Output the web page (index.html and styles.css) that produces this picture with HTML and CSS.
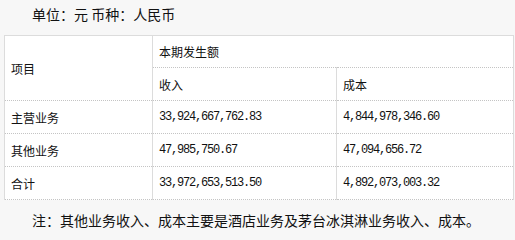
FILE: index.html
```html
<!DOCTYPE html>
<html lang="zh">
<head>
<meta charset="utf-8">
<link rel="stylesheet" href="styles.css">
</head>
<body>
<div class="page">
  <p class="unit">单位：元 币种：人民币</p>
  <table class="tbl">
    <colgroup>
      <col class="c1"><col class="c2"><col class="c3">
    </colgroup>
    <tr class="first">
      <td rowspan="2">项目</td>
      <td colspan="2">本期发生额</td>
    </tr>
    <tr>
      <td>收入</td>
      <td>成本</td>
    </tr>
    <tr>
      <td>主营业务</td>
      <td class="num">33,924,667,762.83</td>
      <td class="num">4,844,978,346.60</td>
    </tr>
    <tr>
      <td>其他业务</td>
      <td class="num">47,985,750.67</td>
      <td class="num">47,094,656.72</td>
    </tr>
    <tr>
      <td>合计</td>
      <td class="num">33,972,653,513.50</td>
      <td class="num">4,892,073,003.32</td>
    </tr>
  </table>
  <p class="note">注：其他业务收入、成本主要是酒店业务及茅台冰淇淋业务收入、成本。</p>
</div>
</body>
</html>
```

FILE: styles.css
```css
html, body {
  margin: 0;
  padding: 0;
  background: #f7f7f7;
}
body {
  font-family: "Noto Sans CJK SC", "Liberation Sans", sans-serif;
  color: #111;
}
.page {
  width: 515px;
  height: 240px;
  overflow: hidden;
}
.unit {
  margin: 0;
  padding-left: 32px;
  font-size: 14px;
  line-height: 29px;
  height: 35px;
}
.tbl {
  margin-left: 4px;
  width: 509px;
  border-collapse: collapse;
  table-layout: fixed;
  background: #fff;
  font-size: 12px;
}
.c1 { width: 148px; }
.c2 { width: 184px; }
.c3 { width: 177px; }
.tbl tr { height: 33px; }
.tbl td {
  padding: 0 5px 0 6px;
  border-left: 1px solid #dcdcdc;
  border-right: 1px solid #dcdcdc;
  border-bottom: 1px dotted #c4c4c4;
  vertical-align: middle;
  white-space: nowrap;
}
.tbl tr.first td {
  border-top: 1px solid #dcdcdc;
}
.tbl tr.first { height: 32px; }
.num {
  font-family: "Liberation Mono", "DejaVu Sans Mono", monospace;
  font-size: 12px;
  letter-spacing: -1.2px;
}
.note {
  margin: 0;
  padding-left: 32px;
  font-size: 14px;
  line-height: 40px;
}
```
